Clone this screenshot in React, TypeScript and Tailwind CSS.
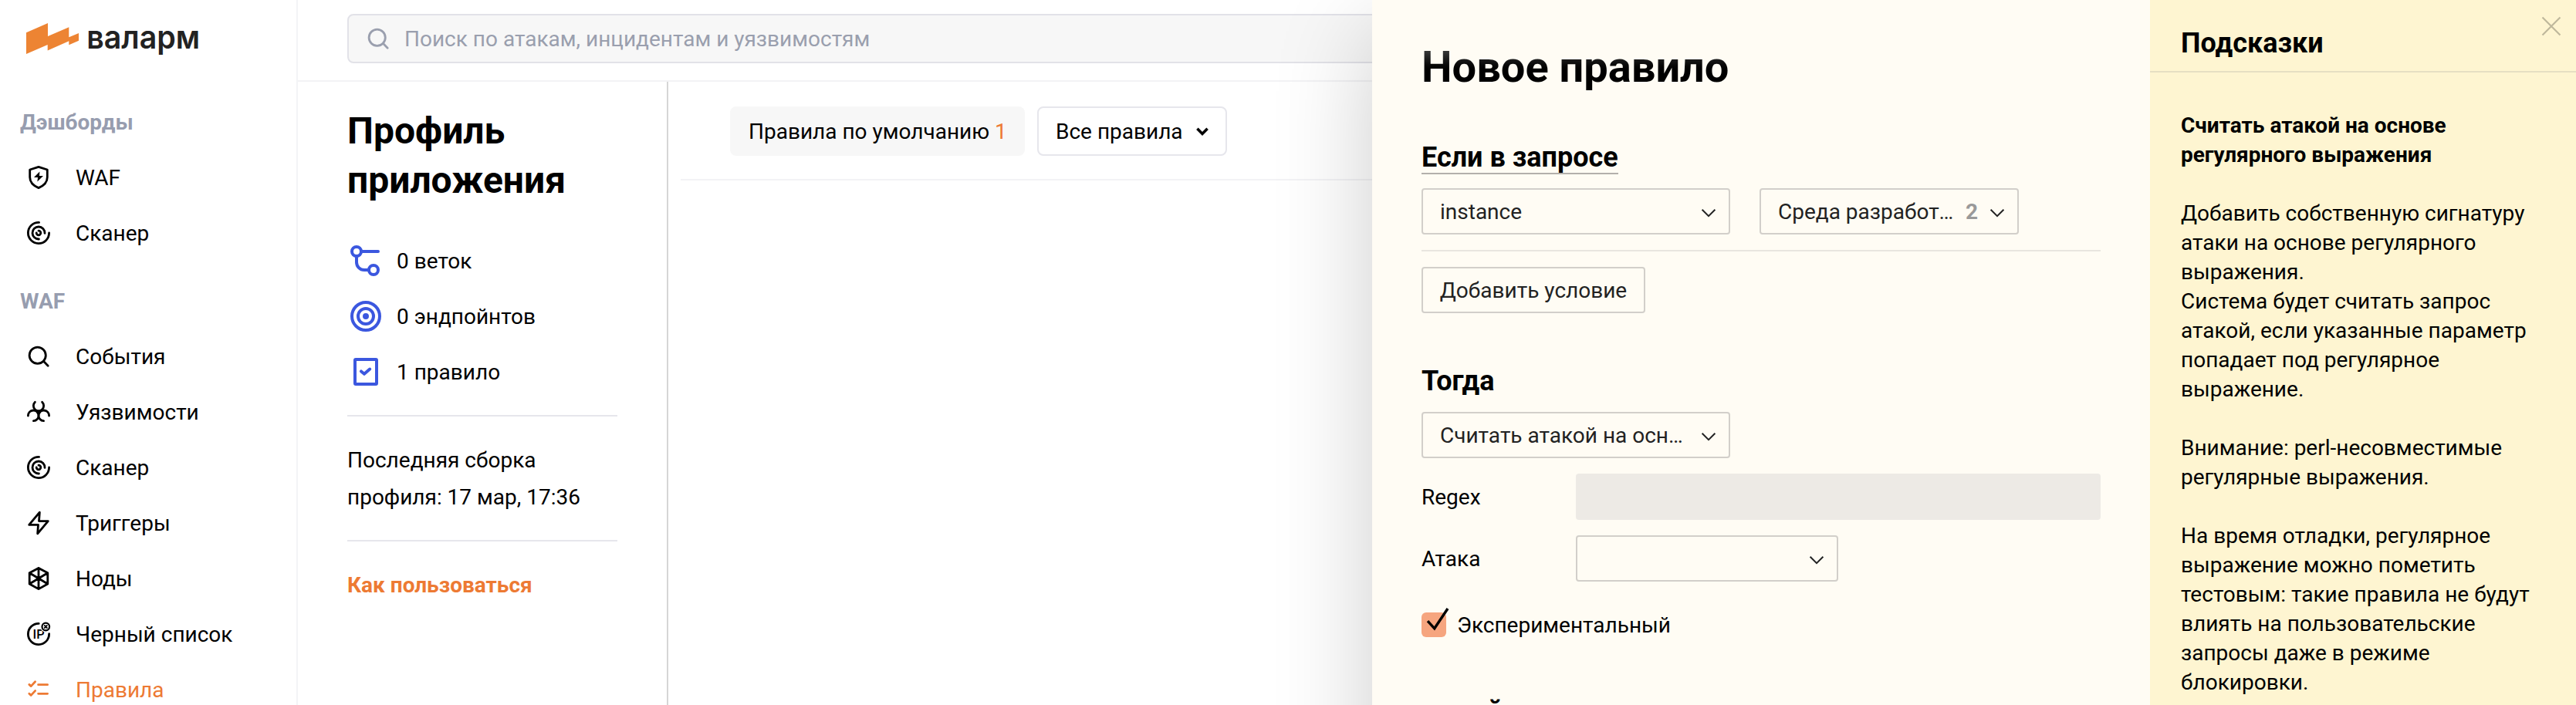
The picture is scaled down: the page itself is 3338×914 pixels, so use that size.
import type { ReactNode } from 'react'

function Glyph({ children, className = '' }: { children: ReactNode; className?: string }) {
  return (
    <svg
      viewBox="0 0 24 24"
      className={`h-12 w-12 shrink-0 ${className}`}
      fill="none"
      stroke="currentColor"
      strokeWidth="1.4"
      strokeLinecap="round"
      strokeLinejoin="round"
    >
      {children}
    </svg>
  )
}

const ShieldGlyph = () => (
  <Glyph>
    <path d="M12 5.2 17.65 7v4.9c0 3.3-2.5 5.6-5.65 6.9-3.15-1.3-5.65-3.6-5.65-6.9V7Z" />
    <path d="M12.7 8.3 9 12h2.5l-.3 2.8L15 11h-2.5Z" fill="currentColor" stroke="none" />
  </Glyph>
)

const RadarGlyph = () => (
  <Glyph>
    <path d="M12.3 5.2A6.8 6.8 0 1 0 18.8 12" />
    <path d="M16 12.2A4 4 0 1 0 12.2 16" />
    <path d="M12 10.6A1.4 1.4 0 1 1 10.6 12" />
  </Glyph>
)

const SearchGlyph = ({ className = '' }: { className?: string }) => (
  <Glyph className={className}>
    <circle cx="11.35" cy="11.4" r="5.3" />
    <path d="m15.3 15.3 2.8 2.8" />
  </Glyph>
)

const BiohazardGlyph = () => (
  <Glyph>
    <path d="M9.7 5.6A3.33 3.33 0 1 0 14.3 5.6" />
    <path d="M5.2 14.5A3.4 3.4 0 1 1 8.7 17.8" />
    <path d="M18.8 14.5A3.4 3.4 0 1 0 15.3 17.8" />
    <circle cx="12" cy="12.3" r=".6" fill="currentColor" />
  </Glyph>
)

const BoltGlyph = () => (
  <Glyph>
    <path d="M12.67 5.1 5.85 13.2h5.9l-.4 5.7 6.8-8.1h-5.9Z" />
  </Glyph>
)

const NodesGlyph = () => (
  <Glyph>
    <path d="m12 5.2 5.9 3.2v7.1L12 18.8l-5.9-3.3V8.4ZM12 5.2v13.6M6.1 8.4l11.8 7.1M17.9 8.4 6.1 15.5" />
  </Glyph>
)

const BlacklistGlyph = () => (
  <Glyph>
    <path d="M12.1 5.2A6.8 6.8 0 1 0 18.8 11.8" />
    <text
      x="8.3"
      y="15.1"
      fontSize="8.2"
      fontWeight="500"
      fill="currentColor"
      stroke="none"
      fontFamily="Roboto, sans-serif"
    >
      IP
    </text>
    <circle cx="16.65" cy="7.25" r="3.6" fill="#fff" stroke="none" />
    <circle cx="16.65" cy="7.25" r="2.4" strokeWidth="1.1" />
    <path d="m15.9 6.5 1.5 1.5M17.4 6.5l-1.5 1.5" strokeWidth=".9" />
  </Glyph>
)

const RulesGlyph = () => (
  <Glyph>
    <path d="M11.8 8.85h6M11.8 14.65h6" />
    <path d="m5.9 8.7 1.2 1.1 2.7-2.9M5.9 14.6l1.2 1.1 2.7-2.9" />
  </Glyph>
)

const BranchGlyph = () => (
  <Glyph className="text-[#3b57df]">
    <g strokeWidth="2">
      <circle cx="6" cy="6" r="3" />
      <circle cx="17" cy="18" r="3" />
      <path d="M9.5 6H20M6 9.5V13a5 5 0 0 0 5 5h2.5" />
    </g>
  </Glyph>
)

const TargetGlyph = () => (
  <Glyph className="text-[#3b57df]">
    <g strokeWidth="2">
      <circle cx="12" cy="12" r="9" />
      <circle cx="12" cy="12" r="5" />
      <circle cx="12" cy="12" r="1" />
    </g>
  </Glyph>
)

const CheckBoxGlyph = () => (
  <Glyph className="text-[#3b57df]">
    <g strokeWidth="2">
      <rect x="5" y="4" width="14" height="16" rx=".5" />
      <path d="m9 11.7 2 1.7 3.6-3.1" />
    </g>
  </Glyph>
)

const Chevron = () => (
  <svg viewBox="0 0 20 12" className="h-3 w-5 shrink-0" fill="none" stroke="#222" strokeWidth="2">
    <path d="m1.6 1.8 8.4 8.4 8.4-8.4" />
  </svg>
)

function NavLabel({ children }: { children: ReactNode }) {
  return <div className="flex h-[72px] items-center pt-0.5 font-bold text-[#979daf]">{children}</div>
}

function NavItem({ icon, label, active = false }: { icon: ReactNode; label: string; active?: boolean }) {
  return (
    <a className={`flex h-[72px] items-center gap-6 ${active ? 'text-[#ed7a33]' : 'text-black'}`}>
      {icon}
      <span className="pt-0.5">{label}</span>
    </a>
  )
}

function Sidebar() {
  return (
    <aside className="h-full w-[386px] shrink-0 border-r-2 border-[#f3f4f6] pl-[26px]">
      <div className="flex h-[122px] items-start pt-6 pl-2">
        <svg viewBox="0 0 240 56" className="h-14 w-60" aria-label="валарм">
          <path
            fill="#ed8433"
            d="M0 18.3 28 6v17l27.3-11.7v13L68 19v9.7l-12.7 5.6v-5L27.7 41.6V34L0 46Z"
          />
          <text
            x="78.2"
            y="39.3"
            fontFamily="Inter, sans-serif"
            fontSize="41.5"
            fontWeight="600"
            fill="#222"
            textLength="147"
            lengthAdjust="spacingAndGlyphs"
          >
            валарм
          </text>
        </svg>
      </div>
      <NavLabel>Дэшборды</NavLabel>
      <NavItem icon={<ShieldGlyph />} label="WAF" />
      <NavItem icon={<RadarGlyph />} label="Сканер" />
      <div className="pt-4">
        <NavLabel>WAF</NavLabel>
      </div>
      <NavItem icon={<SearchGlyph />} label="События" />
      <NavItem icon={<BiohazardGlyph />} label="Уязвимости" />
      <NavItem icon={<RadarGlyph />} label="Сканер" />
      <NavItem icon={<BoltGlyph />} label="Триггеры" />
      <NavItem icon={<NodesGlyph />} label="Ноды" />
      <NavItem icon={<BlacklistGlyph />} label="Черный список" />
      <NavItem icon={<RulesGlyph />} label="Правила" active />
    </aside>
  )
}

function Stat({ icon, label }: { icon: ReactNode; label: string }) {
  return (
    <div className="flex h-[72px] items-center gap-4">
      {icon}
      <span className="pt-0.5">{label}</span>
    </div>
  )
}

function Profile() {
  return (
    <section className="w-[480px] shrink-0 border-r-2 border-[#d6d6d6] pt-8 pr-16 pl-16">
      <h1 className="text-[48px] leading-[64px] font-bold">
        Профиль
        <br />
        приложения
      </h1>
      <div className="mt-9 mb-5">
        <Stat icon={<BranchGlyph />} label="0 веток" />
        <Stat icon={<TargetGlyph />} label="0 эндпойнтов" />
        <Stat icon={<CheckBoxGlyph />} label="1 правило" />
      </div>
      <p className="border-y-2 border-[#e6e6ec] pt-[33px] pb-[31px] leading-[48px]">
        Последняя сборка
        <br />
        профиля: 17 мар, 17:36
      </p>
      <a className="mt-[33px] block leading-[48px] font-bold text-[#ed7a33]">Как пользоваться</a>
    </section>
  )
}

function Main() {
  return (
    <div className="flex min-w-0 flex-1 flex-col">
      <header className="flex h-[106px] shrink-0 items-start border-b-2 border-[#f3f3f5] px-16 pt-[18px]">
        <div className="flex h-16 flex-1 items-center rounded-lg border-2 border-[#e2e2e8] bg-[#f7f7f7] pl-[14px] text-[#9a9fae]">
          <SearchGlyph />
          <span className="pt-0.5 pl-[10px]">Поиск по атакам, инцидентам и уязвимостям</span>
        </div>
      </header>
      <div className="flex flex-1">
        <Profile />
        <section className="flex-1 pl-4">
          <div className="flex gap-4 border-b-2 border-[#f3f3f5] pt-8 pb-[30px] pl-16">
            <button className="h-16 w-[382px] rounded-lg bg-[#f7f7f7] pt-0.5 pl-6 text-left">
              Правила по умолчанию <span className="text-[#ed7a33]">1</span>
            </button>
            <button className="flex h-16 w-[246px] items-center rounded-lg border-2 border-[#e6e6ec] pr-5 pl-[22px]">
              <span className="flex-1 pt-0.5 text-left">Все правила</span>
              <svg viewBox="0 0 20 16" className="h-4 w-5" fill="none" stroke="#000" strokeWidth="3.6">
                <path d="m3.4 4.8 6.6 6.6 6.6-6.6" />
              </svg>
            </button>
          </div>
        </section>
      </div>
    </div>
  )
}

function Select({ value = '', count, className }: { value?: string; count?: string; className: string }) {
  return (
    <div
      className={`flex h-[60px] items-center rounded border-2 border-[#d2cfca] pr-4 pl-[22px] text-[#222] ${className}`}
    >
      <span className="flex-1 pt-0.5 whitespace-nowrap">{value}</span>
      {count && <span className="pt-0.5 pr-[15px] font-bold text-[#999]">{count}</span>}
      <div className="pt-1">
        <Chevron />
      </div>
    </div>
  )
}

function RuleForm() {
  return (
    <section className="w-[1008px] shrink-0 bg-[#fffcf4] px-16 pt-[55px]">
      <h2 className="bg-linear-to-b from-[#333] from-20% to-black to-65% bg-clip-text text-[56px] leading-[64px] font-bold text-transparent">
        Новое правило
      </h2>
      <h3 className="mt-[65px] w-fit border-b-2 border-[#b3b0ab] text-[36px] leading-[40px] font-bold">
        Если в запросе
      </h3>
      <div className="mt-[18px] flex gap-[38px] border-b-2 border-[#e8e5df] pb-5">
        <Select value="instance" className="w-[400px]" />
        <Select value="Среда разработ…" count="2" className="w-[336px]" />
      </div>
      <button className="mt-5 h-[60px] w-[290px] rounded border-2 border-[#d2cfca] pt-0.5 text-[#222]">
        Добавить условие
      </button>
      <h3 className="mt-[68px] mb-5 text-[36px] leading-[40px] font-bold">Тогда</h3>
      <Select value="Считать атакой на осн…" className="w-[400px]" />
      <div className="mt-5 flex h-[60px] items-center">
        <span className="w-[200px] pt-0.5">Regex</span>
        <div className="h-[60px] flex-1 rounded bg-[#edeae5]" />
      </div>
      <div className="mt-5 flex h-[60px] items-center">
        <span className="w-[200px] pt-0.5">Атака</span>
        <Select className="w-[340px]" />
      </div>
      <label className="mt-9 flex h-10 items-center gap-[14px]">
        <span className="h-8 w-8 rounded-md bg-[#f6a57f]">
          <svg viewBox="0 0 40 40" className="-mt-2 h-10 w-10 max-w-none" fill="none" stroke="#000" strokeWidth="3.4">
            <path d="m8 19.2 8.8 9.6L34 3" />
          </svg>
        </span>
        <span className="pt-0.5">Экспериментальный</span>
      </label>
      <h3 className="mt-[72px] text-[36px] leading-[40px] font-bold">в этой части запроса</h3>
    </section>
  )
}

const hintLines = [
  'Добавить собственную сигнатуру',
  'атаки на основе регулярного',
  'выражения.',
  'Система будет считать запрос',
  'атакой, если указанные параметр',
  'попадает под регулярное',
  'выражение.',
  '',
  'Внимание: perl-несовместимые',
  'регулярные выражения.',
  '',
  'На время отладки, регулярное',
  'выражение можно пометить',
  'тестовым: такие правила не будут',
  'влиять на пользовательские',
  'запросы даже в режиме',
  'блокировки.',
]

function Hints() {
  return (
    <aside className="flex-1 bg-[#fef5d1]">
      <div className="flex h-[94px] justify-between border-b-2 border-[#e6dfc3] pr-[18px] pl-10">
        <h3 className="pt-9 text-[36px] leading-[40px] font-bold">Подсказки</h3>
        <svg viewBox="0 0 28 28" className="mt-5 h-7 w-7" stroke="#bfb89c" strokeWidth="2.2">
          <path d="m2.5 2.5 23 23M25.5 2.5l-23 23" />
        </svg>
      </div>
      <div className="pt-[50px] pl-10 leading-[38px] whitespace-nowrap">
        <p className="mb-[38px] font-bold">
          Считать атакой на основе
          <br />
          регулярного выражения
        </p>
        {hintLines.map((line, i) => (
          <p key={i} className="h-[38px]">
            {line}
          </p>
        ))}
      </div>
    </aside>
  )
}

export default function App() {
  return (
    <div className="relative flex h-[914px] w-[3338px] overflow-hidden bg-white font-['Roboto',sans-serif] text-[28px] leading-[40px] text-black">
      <Sidebar />
      <Main />
      <div className="absolute top-0 right-0 flex h-[1100px] w-[1560px] shadow-[0_40px_120px_rgba(0,0,0,0.2)]">
        <RuleForm />
        <Hints />
      </div>
    </div>
  )
}
